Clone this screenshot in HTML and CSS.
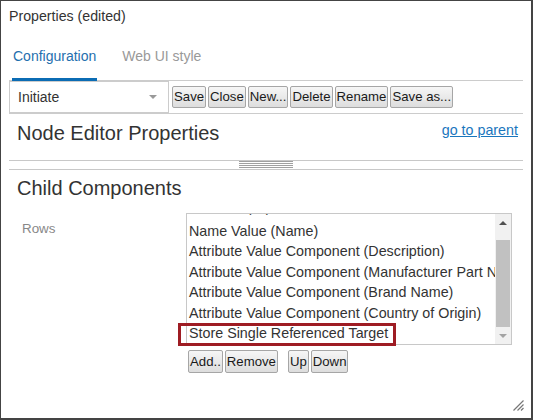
FILE: index.html
```html
<!DOCTYPE html>
<html>
<head>
	<title>Properties</title>
	<link rel="stylesheet" href="styles.css">
</head>
<body>
	<div class="window">
		<div class="title">Properties (edited)</div>
		<div class="tabs">
			<div class="tab active">Configuration</div>
			<div class="tab">Web UI style</div>
		</div>
		<div class="toolbar">
			<div class="select"><span>Initiate</span><span class="caret"></span></div>
			<div class="btns">
				<button>Save</button>
				<button>Close</button>
				<button>New...</button>
				<button>Delete</button>
				<button>Rename</button>
				<button>Save as...</button>
			</div>
		</div>
		<div class="section-head">
			<h2>Node Editor Properties</h2>
			<a href="#">go to parent</a>
		</div>
		<div class="splitter"><div class="grip"></div></div>
		<div class="section">
			<h2>Child Components</h2>
			<div class="field">
				<div class="label">Rows</div>
				<div class="field-body">
					<div class="listbox">
						<div class="items">
							<ul>
								<li>ID Value (ID)</li>
								<li>Name Value (Name)</li>
								<li>Attribute Value Component (Description)</li>
								<li>Attribute Value Component (Manufacturer Part Number)</li>
								<li>Attribute Value Component (Brand Name)</li>
								<li>Attribute Value Component (Country of Origin)</li>
								<li>Store Single Referenced Target</li>
							</ul>
						</div>
						<div class="scrollbar">
							<div class="sb-btn"><span class="up"></span></div>
							<div class="thumb"></div>
							<div class="sb-btn"><span class="down"></span></div>
						</div>
						<!-- annotation box -->
						<div class="highlight"></div>
					</div>
					<div class="list-btns">
						<button>Add..</button>
						<button>Remove</button>
						<button class="sep">Up</button>
						<button>Down</button>
					</div>
				</div>
			</div>
		</div>
		<svg class="resize" width="12" height="12" viewBox="0 0 12 12">
			<path d="M11.5 1.5 L1.5 11.5 M11.5 5.5 L5.5 11.5 M11.5 9 L9 11.5" stroke="#777" stroke-width="1.2" fill="none"/>
		</svg>
	</div>
</body>
</html>
```

FILE: styles.css
```css
*{
	margin: 0;
	padding: 0;
}
body{
	font-family: "Liberation Sans", Arial, sans-serif;
	background: #fff;
}
ul{
	list-style: none;
}
.window{
	position: relative;
	width: 533px;
	height: 420px;
	box-sizing: border-box;
	border: 1px solid #444;
	border-right-width: 2px;
	border-bottom-width: 2px;
	color: #333;
}
.title{
	height: 31px;
	line-height: 31px;
	padding-left: 8px;
	font-size: 14.2px;
}
.tabs{
	display: flex;
	align-items: flex-start;
	gap: 24px;
	height: 48px;
	margin: 0 8px;
	border-bottom: 1px solid #ccc;
}
.tab{
	display: flex;
	align-items: center;
	height: 49px;
	box-sizing: border-box;
	padding: 2px 1px 0;
	border-bottom: 3px solid transparent;
	font-size: 14px;
	color: #999;
}
.tab:first-child{
	margin-left: 3px;
}
.tab.active{
	color: #1f6fae;
	border-bottom-color: #0b6cb4;
}
.toolbar{
	display: flex;
	align-items: center;
	gap: 3px;
	height: 32px;
	margin: 0 8px;
	border-bottom: 1px solid #ccc;
}
.select{
	display: flex;
	align-items: center;
	justify-content: space-between;
	width: 160px;
	height: 32px;
	box-sizing: border-box;
	border: 1px solid #ccc;
	padding: 0 11px 0 8px;
	font-size: 14px;
	color: #333;
}
.caret{
	border-left: 4px solid transparent;
	border-right: 4px solid transparent;
	border-top: 4px solid #999;
}
.btns{
	display: flex;
	gap: 2px;
}
button{
	height: 22px;
	padding: 0 1px;
	border: 1px solid #a6a6a6;
	border-radius: 2px;
	background: linear-gradient(#f6f6f6, #dddddd);
	font-family: "Liberation Sans", Arial, sans-serif;
	font-size: 13.2px;
	line-height: 20px;
	color: #1a1a1a;
}
h2{
	font-size: 20px;
	font-weight: normal;
	line-height: 22px;
	color: #333;
}
.section-head{
	display: flex;
	justify-content: space-between;
	align-items: flex-start;
	height: 46px;
	box-sizing: border-box;
	margin: 0 8px;
	padding: 8px 5px 0 8px;
}
.section-head a{
	font-size: 14.3px;
	line-height: 16px;
	color: #1a76bd;
}
.splitter{
	display: flex;
	justify-content: center;
	height: 8px;
	margin: 0 8px;
	border-top: 1px solid #c8c8c8;
	border-bottom: 1px solid #c8c8c8;
}
.grip{
	width: 54px;
	height: 7px;
	background: repeating-linear-gradient(to bottom, #a0a0a0 0 1px, transparent 1px 2px);
}
.section{
	margin: 0 8px;
	padding-top: 7px;
}
.section h2{
	padding-left: 8px;
}
.field{
	display: flex;
	margin-top: 14px;
}
.label{
	width: 164px;
	padding: 8px 0 0 13px;
	font-size: 13.4px;
	line-height: 16px;
	color: #888;
}
.listbox{
	position: relative;
	display: flex;
	width: 326px;
	height: 132px;
	box-sizing: border-box;
	border: 1px solid #c8c8c8;
}
.items{
	flex: 1;
	overflow: hidden;
	padding-left: 2px;
}
.items ul{
	margin-top: -14px;
}
.items li{
	height: 20.5px;
	line-height: 20.5px;
	white-space: nowrap;
	font-size: 14.3px;
	color: #333;
}
.items li:first-child{
	line-height: 14px;
}
.scrollbar{
	display: flex;
	flex-direction: column;
	align-items: center;
	width: 16px;
	background: #f1f1f1;
}
.sb-btn{
	display: flex;
	align-items: center;
	justify-content: center;
	width: 16px;
	height: 17px;
}
.sb-btn .up{
	border-left: 4px solid transparent;
	border-right: 4px solid transparent;
	border-bottom: 4px solid #505050;
}
.sb-btn .down{
	border-left: 4px solid transparent;
	border-right: 4px solid transparent;
	border-top: 4px solid #a3a3a3;
}
.thumb{
	width: 14px;
	height: 87px;
	margin-top: 9px;
	background: #c1c1c1;
}
.highlight{
	position: absolute;
	left: -9px;
	top: 109px;
	width: 218px;
	height: 23px;
	box-sizing: border-box;
	border: 3px solid #9e1c23;
}
.list-btns{
	display: flex;
	gap: 2px;
	margin-top: 5px;
	padding-left: 2px;
}
.list-btns button{
	height: 23px;
	line-height: 21px;
}
.list-btns .sep{
	margin-left: 8px;
}
.resize{
	position: absolute;
	right: 7px;
	bottom: 7px;
}
```
